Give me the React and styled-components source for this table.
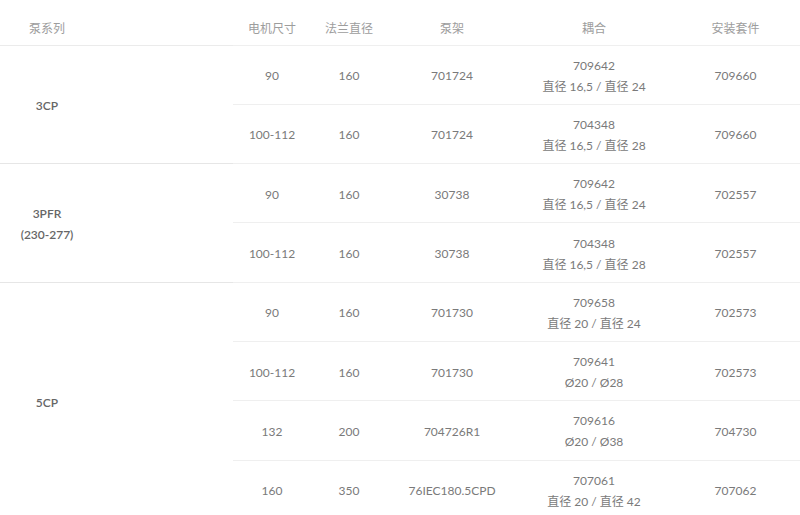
import React from "react";
import styled, { createGlobalStyle } from "styled-components";

const Global = createGlobalStyle`
  html, body { margin: 0; padding: 0; background: #fff; }
  body { font-family: Lato, "Noto Sans CJK SC", "Noto Sans", sans-serif; }
`;

const Table = styled.table`
  width: 800px;
  border-collapse: collapse;
  table-layout: fixed;
  font-size: 12px;
  color: #7a7a7a;
`;

const HeadRow = styled.tr`
  height: 45px;
  border-bottom: 1px solid #ebebeb;
`;

const Th = styled.th`
  box-sizing: border-box;
  font-weight: normal;
  color: #9d9d9d;
  text-align: center;
  vertical-align: top;
  padding: 19px 0 0;
  line-height: 20px;
  ${(p) => p.$first && "padding-right: 139px;"}
`;

const Row = styled.tr`
  height: 59.3px;
  border-top: 1px solid ${(p) => (p.$group ? "#e6e6e6" : "#efefef")};
`;

const Series = styled.td`
  box-sizing: border-box;
  text-align: center;
  vertical-align: middle;
  padding: 2px 139px 0 0;
  font-weight: 600;
  color: #666;
  line-height: 21px;
`;

const Td = styled.td`
  box-sizing: border-box;
  text-align: center;
  vertical-align: middle;
  padding: 2px 0 0;
  line-height: 21px;
  border-top: 1px solid #efefef;
`;

const Colgroup = styled.colgroup``;
const Col = styled.col`
  width: ${(p) => p.$w}px;
`;

const cols = [
  { t: "泵系列", w: 233 },
  { t: "电机尺寸", w: 78 },
  { t: "法兰直径", w: 76 },
  { t: "泵架", w: 130 },
  { t: "耦合", w: 154 },
  { t: "安装套件", w: 129 },
];

const groups = [
  {
    name: ["3CP"],
    rows: [
      ["90", "160", "701724", ["709642", "直径 16,5 / 直径 24"], "709660"],
      ["100-112", "160", "701724", ["704348", "直径 16,5 / 直径 28"], "709660"],
    ],
  },
  {
    name: ["3PFR", "(230-277)"],
    rows: [
      ["90", "160", "30738", ["709642", "直径 16,5 / 直径 24"], "702557"],
      ["100-112", "160", "30738", ["704348", "直径 16,5 / 直径 28"], "702557"],
    ],
  },
  {
    name: ["5CP"],
    rows: [
      ["90", "160", "701730", ["709658", "直径 20 / 直径 24"], "702573"],
      ["100-112", "160", "701730", ["709641", "Ø20 / Ø28"], "702573"],
      ["132", "200", "704726R1", ["709616", "Ø20 / Ø38"], "704730"],
      ["160", "350", "76IEC180.5CPD", ["707061", "直径 20 / 直径 42"], "707062"],
    ],
  },
];

export default function App() {
  return (
    <>
      <Global />
      <Table>
        <Colgroup>
          {cols.map((c, i) => (
            <Col key={i} $w={c.w} />
          ))}
        </Colgroup>
        <thead>
          <HeadRow>
            {cols.map((c, i) => (
              <Th key={i} $first={i === 0}>
                {c.t}
              </Th>
            ))}
          </HeadRow>
        </thead>
        <tbody>
          {groups.map((g, gi) =>
            g.rows.map((r, ri) => (
              <Row key={`${gi}-${ri}`} $group={ri === 0}>
                {ri === 0 && (
                  <Series rowSpan={g.rows.length}>
                    {g.name.map((n, k) => (
                      <div key={k}>{n}</div>
                    ))}
                  </Series>
                )}
                <Td>{r[0]}</Td>
                <Td>{r[1]}</Td>
                <Td>{r[2]}</Td>
                <Td>
                  <div>{r[3][0]}</div>
                  <div>{r[3][1]}</div>
                </Td>
                <Td>{r[4]}</Td>
              </Row>
            ))
          )}
        </tbody>
      </Table>
    </>
  );
}
